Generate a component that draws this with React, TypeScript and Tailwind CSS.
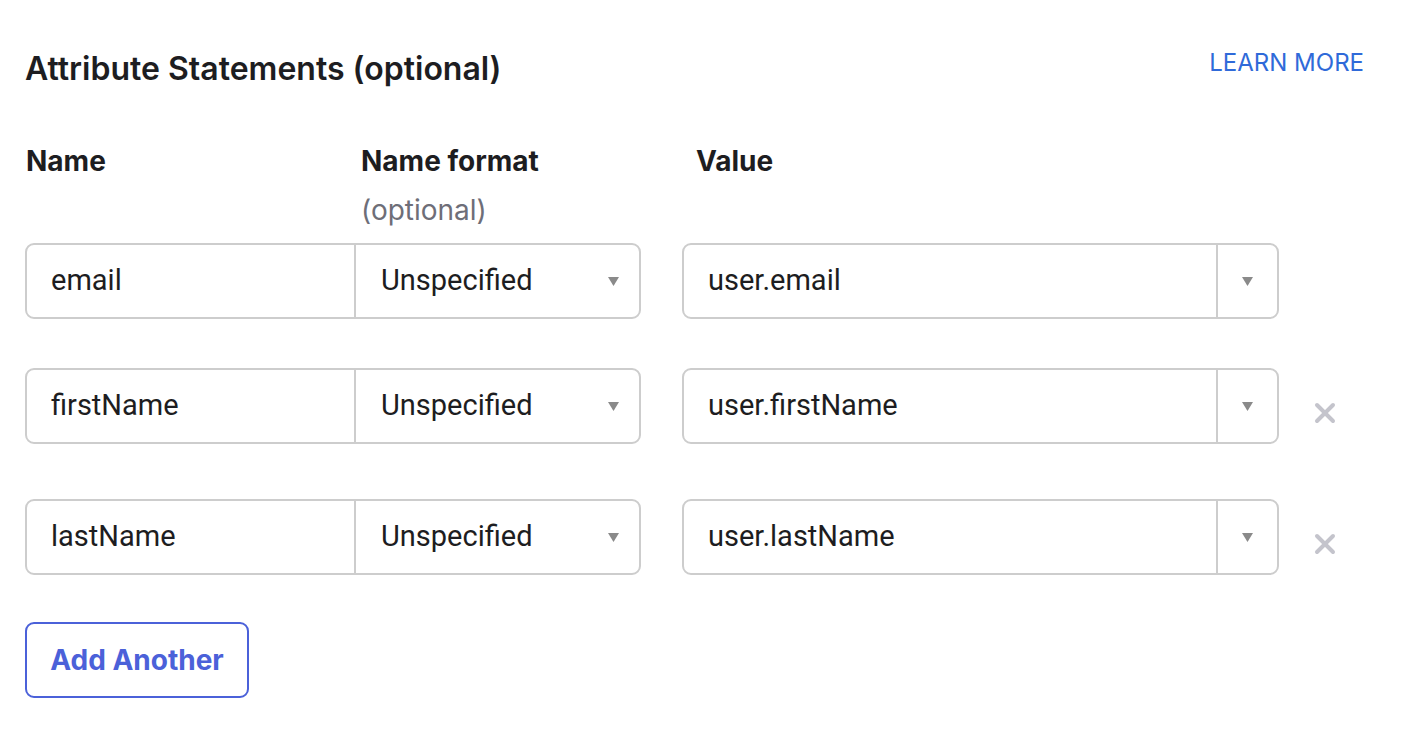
import { X } from 'lucide-react';

type Row = { name: string; value: string; removable: boolean };

const rows: Row[] = [
    { name: 'email', value: 'user.email', removable: false },
    { name: 'firstName', value: 'user.firstName', removable: true },
    { name: 'lastName', value: 'user.lastName', removable: true },
];

function Caret() {
    return (
        <svg width="11" height="9" viewBox="0 0 11 9" className="text-[#8a8a8a]">
            <path d="M0 0h11L5.5 9z" fill="currentColor" />
        </svg>
    );
}

function AttributeRow({ row, className }: { row: Row; className: string }) {
    return (
        <div className={`flex items-center ${className}`}>
            <div className="flex w-[616px] h-[76px] border-2 border-[#cdcdcd] rounded-[9px] overflow-hidden">
                <div className="w-[329px] flex items-center pl-[24px] text-[29px] text-[#1d1d21] border-r-2 border-[#cdcdcd]">
                    {row.name}
                </div>
                <div className="flex-1 flex items-center justify-between pl-[25px] pr-[20px] text-[29px] text-[#1d1d21]">
                    <span>Unspecified</span>
                    <Caret />
                </div>
            </div>
            <div className="ml-[41px] flex w-[597px] h-[76px] border-2 border-[#cdcdcd] rounded-[9px] overflow-hidden">
                <div className="flex-1 flex items-center pl-[24px] text-[29px] text-[#1d1d21] border-r-2 border-[#cdcdcd]">
                    {row.value}
                </div>
                <div className="w-[59px] flex items-center justify-center">
                    <Caret />
                </div>
            </div>
            {row.removable && (
                <button className="ml-[30px] mt-[14px] text-[#c4c4cc]">
                    <X size={32} strokeWidth={3} />
                </button>
            )}
        </div>
    );
}

export default function App() {
    return (
        <div className="min-h-screen bg-white pl-[25px] pr-[38px] pt-[47px] font-['Inter',sans-serif] text-[#1d1d21]">
            <div className="flex items-start justify-between">
                <h2 className="text-[32px] leading-[44px] font-semibold">Attribute Statements (optional)</h2>
                <a href="#" className="text-[24px] leading-[32px] text-[#2f6ad9]">LEARN MORE</a>
            </div>

            <div className="mt-[54px] flex text-[28px] font-bold leading-[32px] pl-[1px]">
                <div className="w-[335px]">Name</div>
                <div className="w-[335px]">
                    <div>Name format</div>
                    <div className="mt-[17px] font-normal text-[#6e6e78]">(optional)</div>
                </div>
                <div>Value</div>
            </div>

            <div className="font-['Roboto',sans-serif]">
                <AttributeRow row={rows[0]} className="mt-[17px]" />
                <AttributeRow row={rows[1]} className="mt-[49px]" />
                <AttributeRow row={rows[2]} className="mt-[55px]" />
            </div>

            <button className="mt-[47px] w-[224px] h-[76px] border-2 border-[#4b61d9] rounded-[9px] text-[28px] font-bold text-[#4b61d9]">
                Add Another
            </button>
        </div>
    );
}
